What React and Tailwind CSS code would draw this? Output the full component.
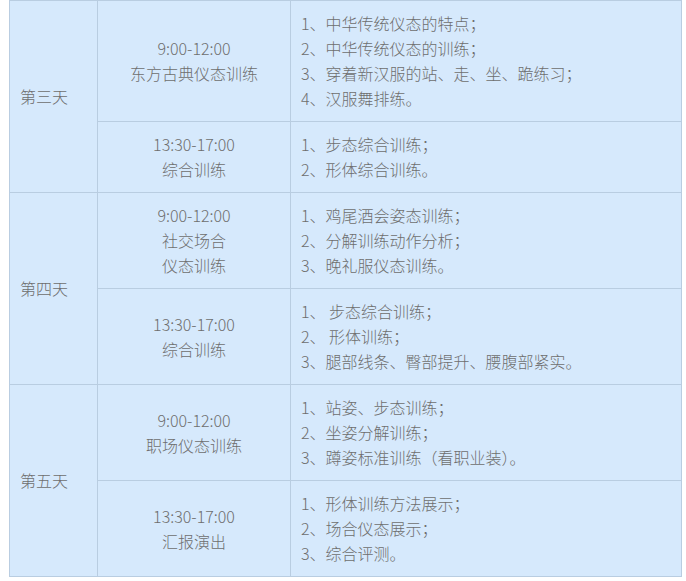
import React from 'react'

// 课程安排：第三天 ~ 第五天
const DAYS = [
  {
    day: '第三天',
    sessions: [
      {
        time: ['9:00-12:00', '东方古典仪态训练'],
        items: ['1、中华传统仪态的特点；', '2、中华传统仪态的训练；', '3、穿着新汉服的站、走、坐、跪练习；', '4、汉服舞排练。'],
        h: 'h-[121px]',
      },
      {
        time: ['13:30-17:00', '综合训练'],
        items: ['1、步态综合训练；', '2、形体综合训练。'],
        h: 'h-[71px]',
      },
    ],
  },
  {
    day: '第四天',
    sessions: [
      {
        time: ['9:00-12:00', '社交场合', '仪态训练'],
        items: ['1、鸡尾酒会姿态训练；', '2、分解训练动作分析；', '3、晚礼服仪态训练。'],
        h: 'h-[96px]',
      },
      {
        time: ['13:30-17:00', '综合训练'],
        items: ['1、 步态综合训练；', '2、 形体训练；', '3、腿部线条、臀部提升、腰腹部紧实。'],
        h: 'h-[96px]',
      },
    ],
  },
  {
    day: '第五天',
    sessions: [
      {
        time: ['9:00-12:00', '职场仪态训练'],
        items: ['1、站姿、步态训练；', '2、坐姿分解训练；', '3、蹲姿标准训练（看职业装）。'],
        h: 'h-[96px]',
      },
      {
        time: ['13:30-17:00', '汇报演出'],
        items: ['1、形体训练方法展示；', '2、场合仪态展示；', '3、综合评测。'],
        h: 'h-[96px]',
      },
    ],
  },
]

export default function App() {
  return (
    <div
      className="w-[686px] h-[581px] bg-white pl-[9px] overflow-hidden"
      style={{ fontFamily: '"Microsoft YaHei", "Noto Sans CJK SC", "Noto Sans", sans-serif' }}
    >
      <table className="w-[672px] table-fixed border-collapse bg-[#d6e9fc] text-[16px] leading-[25px] font-light text-[#6e6e6e]">
        <colgroup>
          <col className="w-[88px]" />
          <col className="w-[193px]" />
          <col className="w-[391px]" />
        </colgroup>
        <tbody>
          {DAYS.map((d) =>
            d.sessions.map((s, i) => (
              <tr key={d.day + i} className={s.h}>
                {i === 0 && (
                  <td
                    rowSpan={d.sessions.length}
                    className="border border-[#b9cde1] pl-[10px] align-middle"
                  >
                    {d.day}
                  </td>
                )}
                <td className="border border-[#b9cde1] text-center align-middle">
                  {s.time.map((t) => (
                    <div key={t}>{t}</div>
                  ))}
                </td>
                <td className="border border-[#b9cde1] pl-[10px] align-middle">
                  {s.items.map((t) => (
                    <div key={t}>{t}</div>
                  ))}
                </td>
              </tr>
            ))
          )}
        </tbody>
      </table>
    </div>
  )
}
